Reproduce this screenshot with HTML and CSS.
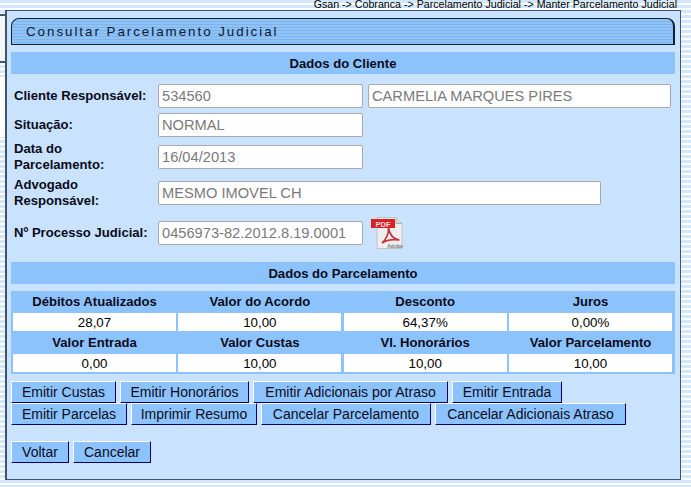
FILE: index.html
```html
<!DOCTYPE html>
<html lang="pt">
<head>
<meta charset="utf-8">
<title>Consultar Parcelamento Judicial</title>
<link rel="stylesheet" href="styles.css">
</head>
<body>
<div class="side-box side-box-top"></div>
<div class="side-box side-box-low"></div>
<div class="breadcrumb">Gsan -&gt; Cobranca -&gt; Parcelamento Judicial -&gt; Manter Parcelamento Judicial</div>
<main class="panel">
  <header class="title-bar">Consultar Parcelamento Judicial</header>
  <h2 class="band band-client">Dados do Cliente</h2>
  <div class="row row-cliente">
    <label class="lbl">Cliente Responsável:</label>
    <span class="field w-short">534560</span>
    <span class="field w-name">CARMELIA MARQUES PIRES</span>
  </div>
  <div class="row row-situacao">
    <label class="lbl">Situação:</label>
    <span class="field w-short">NORMAL</span>
  </div>
  <div class="row row-data">
    <label class="lbl">Data do<br>Parcelamento:</label>
    <span class="field w-short">16/04/2013</span>
  </div>
  <div class="row row-adv">
    <label class="lbl">Advogado<br>Responsável:</label>
    <span class="field w-long">MESMO IMOVEL CH</span>
  </div>
  <div class="row row-proc">
    <label class="lbl">Nº Processo Judicial:</label>
    <span class="field w-short">0456973-82.2012.8.19.0001</span>
    <svg class="pdf" width="32" height="32" viewBox="0 0 32 32">
      <path d="M6 0.5h19l6 6v25H6z" fill="#efeded" stroke="#c4c2c2"/>
      <path d="M25 0.5v6h6" fill="#d8d6d6" stroke="#b0aeae"/>
      <path d="M11 26c4-3 7-10 6.500-15 1 6 4 11 11 12-7-1-13 0-17.500 3z" fill="none" stroke="#c8303a" stroke-width="1.700"/>
      <rect x="0" y="2" width="24" height="9" fill="#dc2027"/>
      <text x="12" y="9.500" class="pdf-text" text-anchor="middle">PDF</text>
      <text x="24" y="30.500" class="pdf-adobe" text-anchor="middle">Adobe</text>
    </svg>
  </div>
  <h2 class="band band-parc">Dados do Parcelamento</h2>
  <div class="values">
    <div class="vh">Débitos Atualizados</div><div class="vh">Valor do Acordo</div><div class="vh">Desconto</div><div class="vh">Juros</div>
    <div class="vc">28,07</div><div class="vc">10,00</div><div class="vc">64,37%</div><div class="vc">0,00%</div>
    <div class="vh vh-low">Valor Entrada</div><div class="vh vh-low">Valor Custas</div><div class="vh vh-low">Vl. Honorários</div><div class="vh vh-low">Valor Parcelamento</div>
    <div class="vc">0,00</div><div class="vc">10,00</div><div class="vc">10,00</div><div class="vc">10,00</div>
  </div>
  <div class="btns btns-first">
    <button class="btn b-custas">Emitir Custas</button><button class="btn b-honor">Emitir Honorários</button><button class="btn b-adic">Emitir Adicionais por Atraso</button><button class="btn b-entrada">Emitir Entrada</button>
  </div>
  <div class="btns">
    <button class="btn b-parc">Emitir Parcelas</button><button class="btn b-resumo">Imprimir Resumo</button><button class="btn b-cancp">Cancelar Parcelamento</button><button class="btn b-canca">Cancelar Adicionais Atraso</button>
  </div>
  <div class="btns btns-last">
    <button class="btn b-voltar">Voltar</button><button class="btn b-cancelar">Cancelar</button>
  </div>
</main>
</body>
</html>
```
FILE: styles.css
```css
html, body { margin: 0; height: 487px; overflow: hidden; }
body {
  position: relative;
  font-family: "Liberation Sans", Arial, sans-serif;
  font-size: 13.1px;
  color: #000;
  background: repeating-linear-gradient(to bottom, #d3e7fb 0 3px, #ffffff 3px 5px);
}
.side-box { position: absolute; left: -2px; width: 6px; background: #f6f6f6; border: 2px solid #3d5570; }
.side-box-top { top: 14px; height: 45px; }
.side-box-low { top: 76px; height: 60px; width: 7px; border: 1px solid #dde3e8; background: #fff; }
.breadcrumb { position: absolute; top: 0; right: 14px; font-size: 10.67px; line-height: 8px; white-space: nowrap; }
.panel {
  position: absolute; left: 5px; top: 10px; width: 673px; height: 468px;
  background: #c9e3fe; border: solid #3d5570; border-width: 1px 1px 1px 2px;
}
.title-bar {
  margin: 7px 5px 0 4px; height: 27px; box-sizing: border-box;
  border: 1px solid #0c2238; border-right-width: 2px; border-radius: 8px 8px 0 0;
  background: repeating-linear-gradient(to bottom, #8fc3f8 0 2px, #7fb3ea 2px 3px);
  padding-left: 14px; line-height: 25px; font-size: 13.33px; letter-spacing: 1.98px; color: #0a1a2e;
}
.band { margin: 7px 5px 0 4px; height: 22px; background: #8dc3fd; font-size: 13.1px; line-height: 23px; text-align: center; font-weight: bold; color: #0b0b1a; }
.row { display: flex; align-items: center; margin-left: 7px; }
.lbl { width: 144px; font-weight: bold; font-size: 13.1px; line-height: 16px; color: #0b0b1a; }
.field {
  box-sizing: border-box; height: 24px; background: #fff; border: 1px solid #a9a9a9; border-radius: 2px;
  color: #7a7a7a; font-size: 14.67px; line-height: 22px; padding-left: 3px; white-space: nowrap; overflow: hidden;
}
.w-short { width: 205px; }
.w-name { width: 303px; margin-left: 5px; }
.w-long { width: 443px; }
.row-cliente { margin-top: 10px; }
.row-situacao { margin-top: 5px; }
.row-data { margin-top: 4px; height: 32px; }
.row-adv { margin-top: 4px; height: 32px; }
.row-proc { margin-top: 8px; height: 32px; }
.pdf { margin-left: 8px; }
.pdf-text { font-family: "Liberation Sans", Arial, sans-serif; font-size: 7.5px; font-weight: bold; fill: #f9dede; }
.pdf-adobe { font-family: "Liberation Sans", Arial, sans-serif; font-size: 5px; font-weight: bold; fill: #777; }
.band-parc { margin-top: 13px; }
.values {
  margin: 7px 5px 0 4px; padding: 0 3px 2px 2px; background: #8dc3fd;
  display: grid; grid-template-columns: repeat(4, 1fr); column-gap: 2.33px;
}
.vh { height: 22px; line-height: 21px; text-align: center; font-weight: bold; font-size: 13.1px; color: #0b0b1a; }
.vh-low { height: 23px; line-height: 23px; }
.vc { height: 18px; line-height: 19px; background: #fff; text-align: center; font-size: 13.33px; color: #000; }
.btns { margin-left: 4px; display: flex; gap: 4px; }
.btns-first { margin-top: 7px; }
.btns-last { margin-top: 16px; }
.btn {
  box-sizing: border-box; height: 22px; padding: 0; margin: 0;
  background: #8dc3fd; color: #0b0b1a;
  border: 1px solid; border-color: #fff #000066 #000066 #fff;
  font-family: "Liberation Sans", Arial, sans-serif; font-size: 14px; white-space: nowrap;
}
.b-custas { width: 105px; }
.b-honor { width: 129px; }
.b-adic { width: 195px; }
.b-entrada { width: 110px; }
.b-parc { width: 116px; }
.b-resumo { width: 126px; }
.b-cancp { width: 170px; }
.b-canca { width: 191px; }
.b-voltar { width: 58px; }
.b-cancelar { width: 78px; }
```
